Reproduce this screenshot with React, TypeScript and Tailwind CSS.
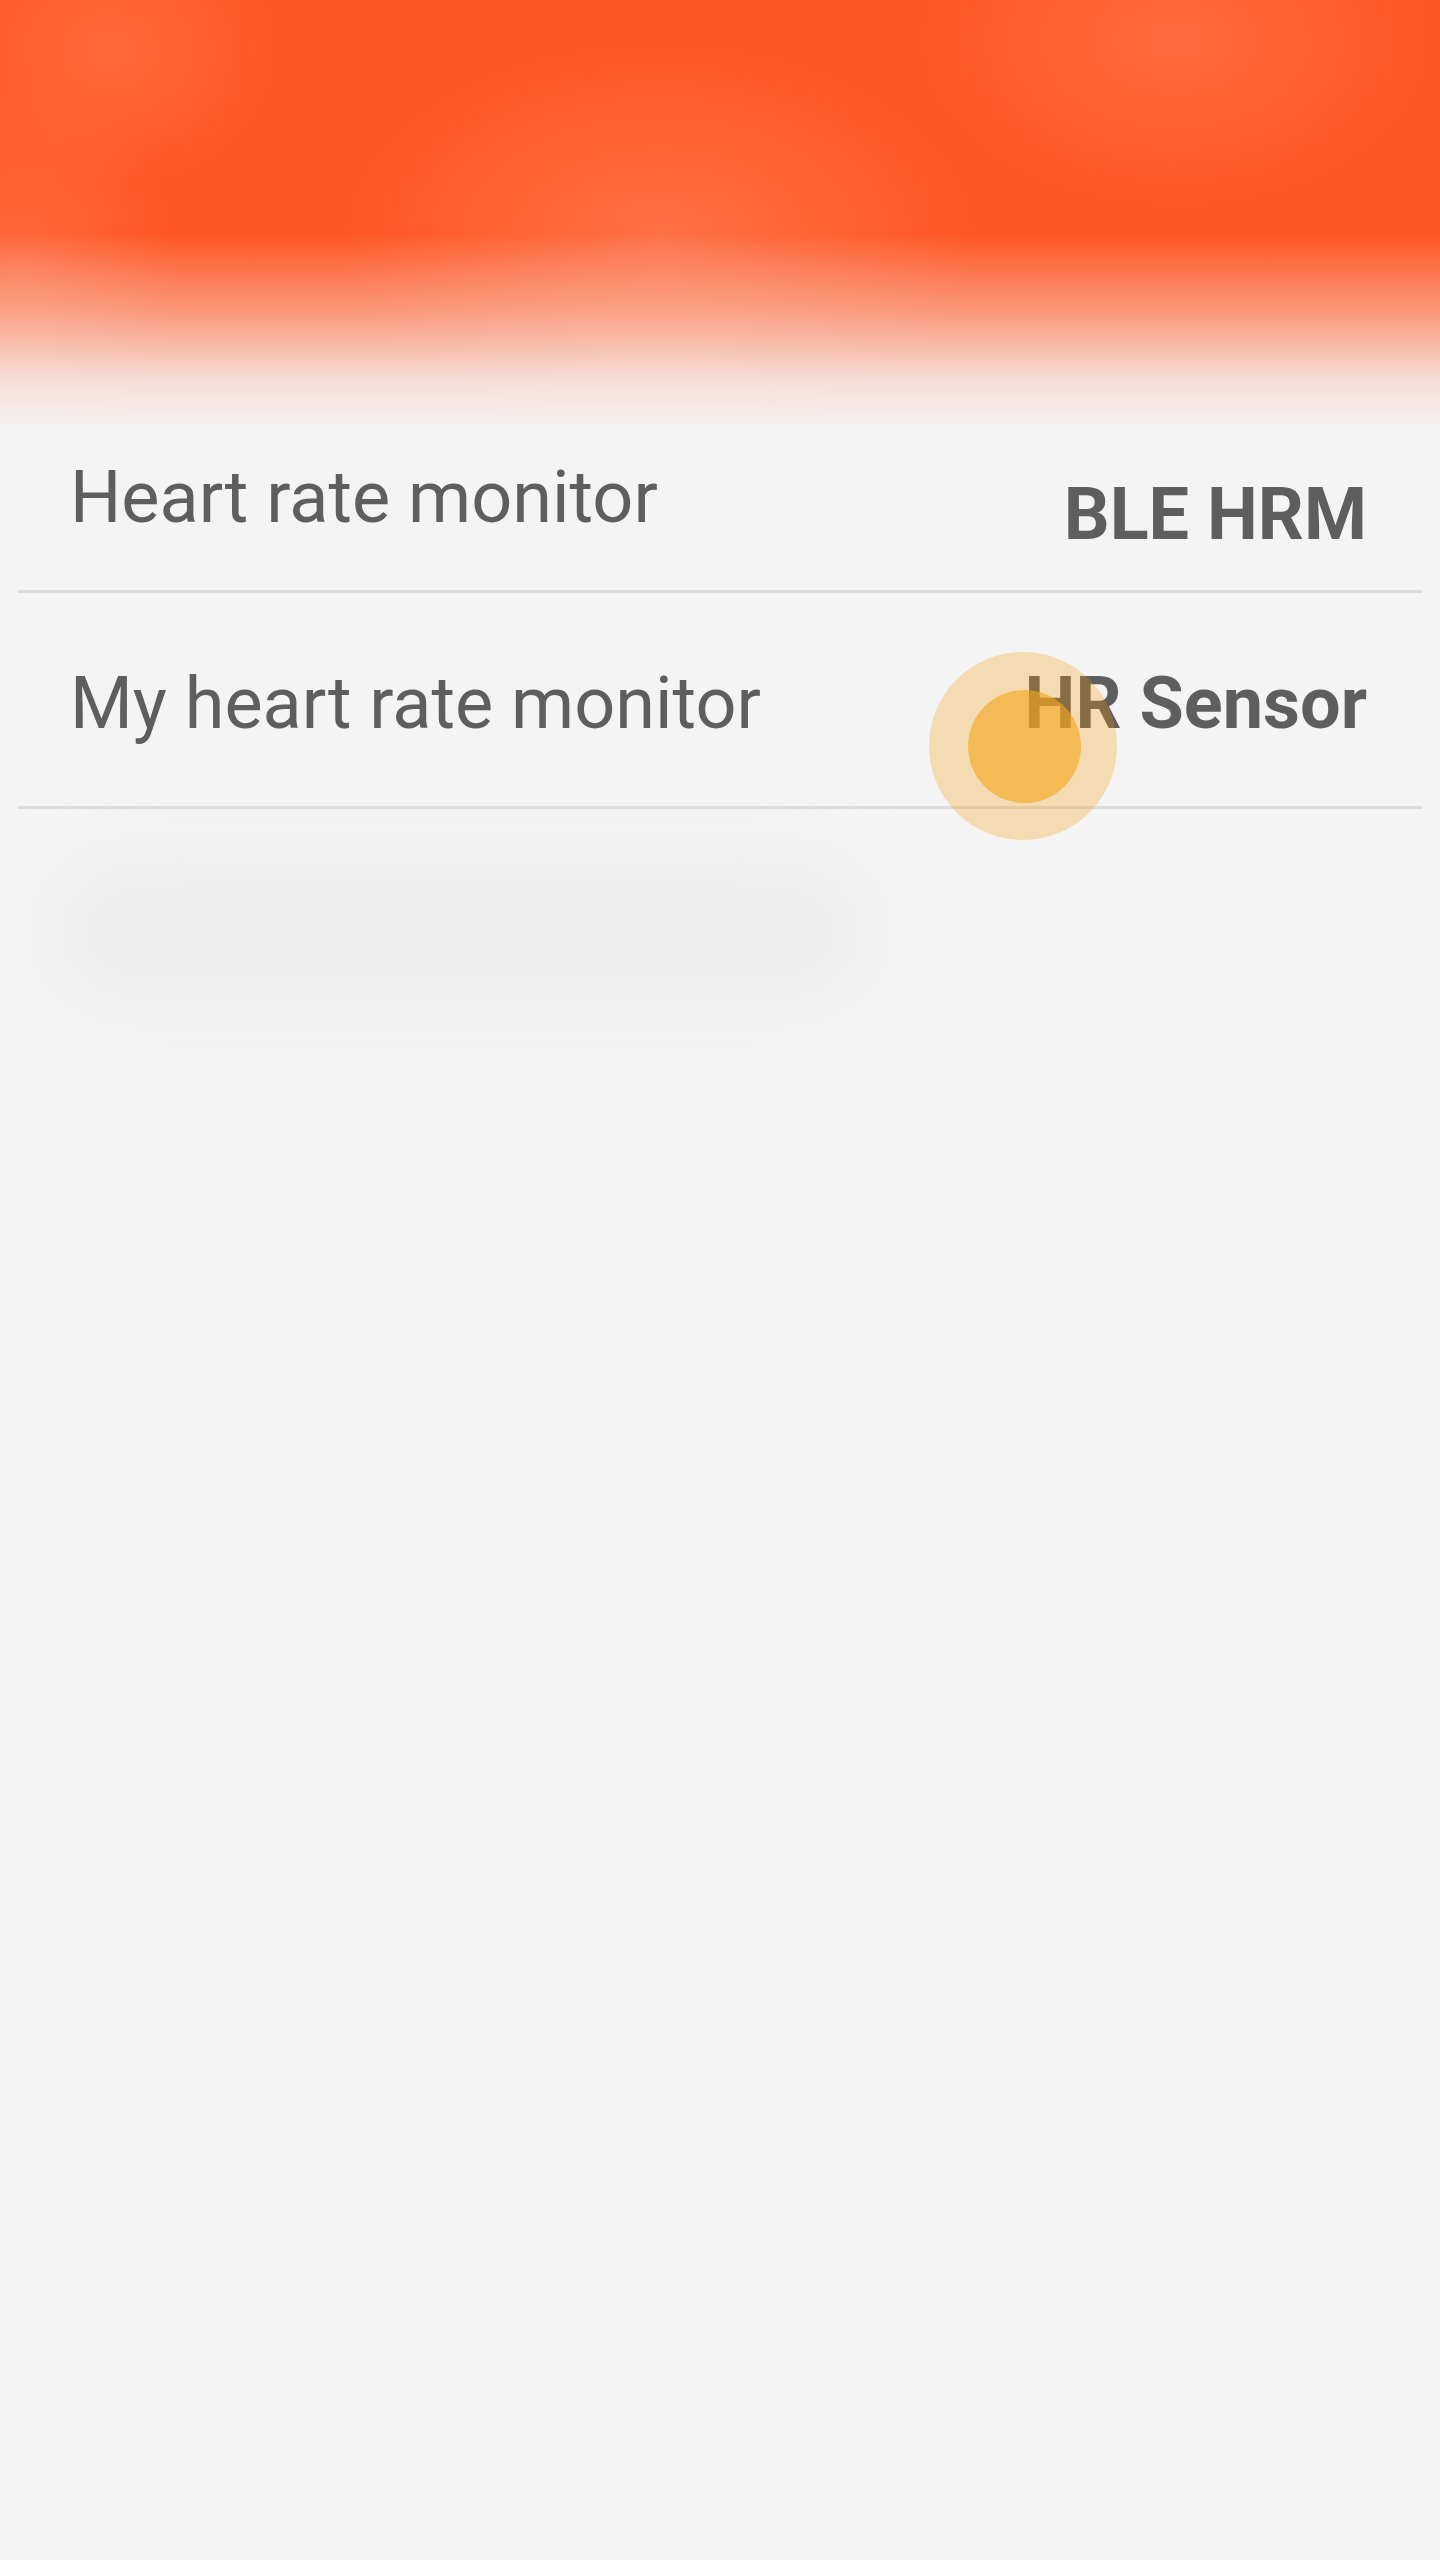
import React from 'react';

type Row = {
  label: string;
  value: string;
  className: string;
  valueClassName: string;
  ripple?: boolean;
};

const rows: Row[] = [
  {
    label: 'Heart rate monitor',
    value: 'BLE HRM',
    className: 'pt-[22px] pb-[39px]',
    valueClassName: 'mt-[17px]',
  },
  {
    label: 'My heart rate monitor',
    value: 'HR Sensor',
    className: 'pt-[75px] pb-[66px]',
    valueClassName: '',
    ripple: true,
  },
];

function SettingRow({ row }: { row: Row }) {
  return (
    <div
      className={`relative mx-[18px] flex items-start justify-between border-b-[3px] border-[#dddddd] pl-[52px] pr-[55px] ${row.className}`}
    >
      <span className="text-[72px] leading-[72px] font-normal text-[#5e5e5e]">{row.label}</span>
      <span className={`text-[72px] leading-[72px] font-bold text-[#5e5e5e] ${row.valueClassName}`}>
        {row.value}
      </span>

      {/* touch ripple sitting over the value */}
      {row.ripple && (
        <>
          <div className="pointer-events-none absolute left-[911px] top-[59px] h-[188px] w-[188px] rounded-full bg-[rgba(248,152,0,0.27)]" />
          <div className="pointer-events-none absolute left-[950px] top-[97px] h-[113px] w-[113px] rounded-full bg-[rgba(242,166,30,0.63)]" />
        </>
      )}
    </div>
  );
}

export default function App() {
  return (
    <div className="min-h-screen w-full overflow-hidden bg-[#f4f4f4] font-['Roboto','Liberation_Sans',sans-serif]">
      {/* Blurred orange header fading into the page */}
      <div className="h-[440px] w-full bg-[#ff5521] bg-[linear-gradient(to_bottom,rgba(244,244,244,0)_53%,rgba(244,244,244,0.45)_72%,rgba(244,244,244,0.85)_86%,#f4f4f4_98%),radial-gradient(170px_140px_at_110px_50px,#ff6a3c,rgba(255,106,60,0)),radial-gradient(260px_170px_at_1175px_40px,#ff6b3f,rgba(255,107,63,0)),radial-gradient(320px_200px_at_660px_240px,#ff7146,rgba(255,113,70,0)),radial-gradient(160px_200px_at_20px_270px,#ff6a3e,rgba(255,106,62,0))]" />

      {rows.map((row) => (
        <SettingRow key={row.label} row={row} />
      ))}

      {/* faint blurred placeholder below the list */}
      <div className="ml-[60px] mt-[62px] h-[120px] w-[800px] rounded-full bg-[#ececec] blur-[36px]" />
    </div>
  );
}
